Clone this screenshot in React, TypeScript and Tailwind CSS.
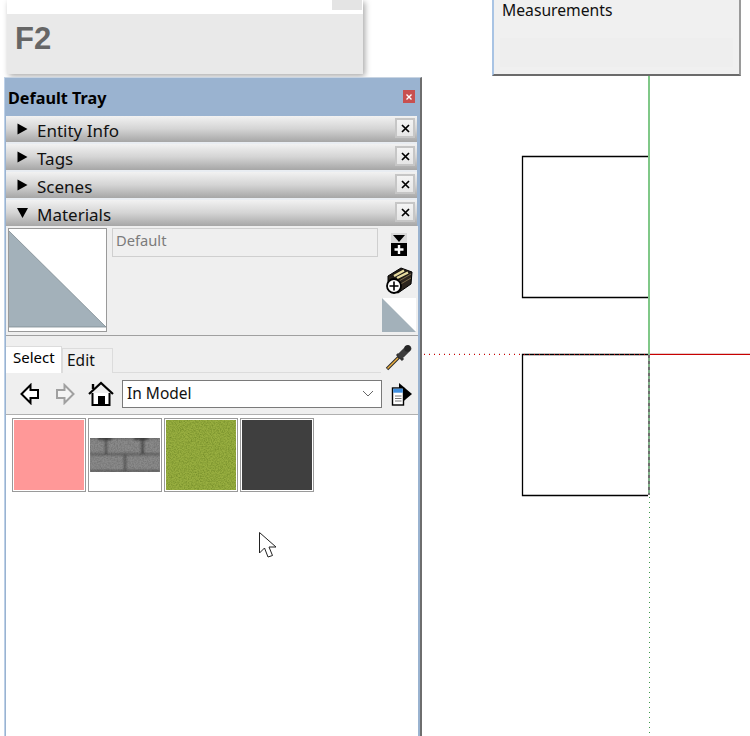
import React from "react";

const FONT = "font-['Noto_Sans','Open_Sans',sans-serif]";

function Row({ label, open }: { label: string; open?: boolean }) {
  return (
    <div className={`mr-px shrink-0 bg-clip-padding ${open ? "h-[26px]" : "h-[28px] border-b-2 border-b-[#e9edf2]"}`}>
      <div className="h-[26px] flex items-start bg-gradient-to-b from-[#f2f2f2] via-[#d4d4d4] to-[#a6a6a6] pr-[2px]">
        <svg width="11" height="12" viewBox="0 0 11 12" className="ml-[11px] mt-[7px] shrink-0">
          {open ? <path d="M0 1 H11 L5.5 11 Z" fill="#000" /> : <path d="M0.5 0.5 L10.5 6 L0.5 11.5 Z" fill="#000" />}
        </svg>
        <span className="ml-[9px] text-[17px] leading-[26px] mt-[2px] text-[#111]">{label}</span>
        <div className="ml-auto mt-[2px] w-[20px] h-[20px] border-2 border-[#c6c6c6] bg-gradient-to-b from-[#f4f4f4] to-[#e6e6e6] flex items-center justify-center">
          <svg width="9" height="9" viewBox="0 0 9 9">
            <path d="M1 1 L8 8 M8 1 L1 8" stroke="#000" strokeWidth="1.7" />
          </svg>
        </div>
      </div>
    </div>
  );
}

function Thumb({ children, bg }: { children?: React.ReactNode; bg: string }) {
  return (
    <div className="w-[74px] h-[74px] border border-[#9a9a9a] p-[1px] bg-white shrink-0">
      <div className={`w-full h-full overflow-hidden ${bg}`}>{children}</div>
    </div>
  );
}

function Bricks() {
  return (
    <svg width="70" height="70" viewBox="0 0 70 70" className="block">
      <defs>
        <filter id="stone" x="0" y="0" width="100%" height="100%" colorInterpolationFilters="sRGB">
          <feTurbulence type="fractalNoise" baseFrequency="0.7" numOctaves="3" seed="4" />
          <feColorMatrix values="0 0 0 0 0.35  0 0 0 0 0.35  0 0 0 0 0.35  0.9 0 0 0 -0.3" />
          <feComposite in2="SourceGraphic" operator="in" />
          <feMerge>
            <feMergeNode in="SourceGraphic" />
            <feMergeNode />
          </feMerge>
        </filter>
        <filter id="soft" x="-20%" y="-20%" width="140%" height="140%">
          <feGaussianBlur stdDeviation="0.9" />
        </filter>
        <clipPath id="strip">
          <rect x="0" y="18" width="70" height="34" />
        </clipPath>
      </defs>
      <rect x="0" y="18" width="70" height="34" fill="#8a8a8a" filter="url(#stone)" />
      <g clipPath="url(#strip)" filter="url(#soft)">
        <rect x="0" y="17" width="70" height="2" fill="#4a4a4a" opacity=".5" />
        <rect x="8" y="17" width="14" height="3" fill="#222" opacity=".7" />
        <rect x="44" y="17" width="14" height="3" fill="#222" opacity=".7" />
        <rect x="0" y="33.5" width="70" height="1.5" fill="#2f2f2f" opacity=".65" />
        <rect x="0" y="50" width="70" height="2" fill="#3a3a3a" opacity=".6" />
        <rect x="15" y="18" width="2" height="16" fill="#2f2f2f" opacity=".6" />
        <rect x="51" y="18" width="3" height="16" fill="#2f2f2f" opacity=".6" />
        <rect x="34" y="35" width="2" height="16" fill="#2f2f2f" opacity=".6" />
      </g>
    </svg>
  );
}

function Grass() {
  return (
    <svg width="70" height="70" viewBox="0 0 70 70" className="block">
      <defs>
        <filter id="grass" x="0" y="0" width="100%" height="100%" colorInterpolationFilters="sRGB">
          <feTurbulence type="fractalNoise" baseFrequency="0.75" numOctaves="2" seed="7" />
          <feColorMatrix values="0 0 0 0 0.42  0 0 0 0 0.52  0 0 0 0 0.14  1.6 0 0 0 -0.6" />
          <feComposite in2="SourceGraphic" operator="in" />
          <feMerge>
            <feMergeNode in="SourceGraphic" />
            <feMergeNode />
          </feMerge>
        </filter>
      </defs>
      <rect width="70" height="70" fill="#98ae40" filter="url(#grass)" />
    </svg>
  );
}

function Canvas() {
  return (
    <svg width="750" height="736" viewBox="0 0 750 736" className="absolute left-0 top-0">
      <rect x="648" y="70" width="2" height="284" fill="#80c888" />
      <rect x="648" y="354" width="2" height="141" fill="#80b088" />
      <line x1="649" y1="355" x2="649" y2="495" stroke="#6f6f6f" strokeWidth="2" strokeDasharray="3 3" />
      <line x1="649.5" y1="497" x2="649.5" y2="736" stroke="#3f9a4a" strokeWidth="1" strokeDasharray="1 4" />
      <rect x="650" y="353" width="100" height="1" fill="#e6c8c8" />
      <rect x="650" y="354" width="100" height="1" fill="#c80000" />
      <line x1="424" y1="353.5" x2="523" y2="353.5" stroke="#d8d0d0" strokeWidth="1" strokeDasharray="1 4" strokeDashoffset="-5" />
      <line x1="424" y1="354.5" x2="523" y2="354.5" stroke="#d00000" strokeWidth="1" strokeDasharray="1 4" strokeDashoffset="-5" />
      <path d="M648 156.5 H522.5 V297.5 H648" fill="none" stroke="#000" strokeWidth="1.3" />
      <path d="M648 354.5 H522.5 V495.5 H648" fill="none" stroke="#000" strokeWidth="1.3" />
      <line x1="524" y1="354.5" x2="648" y2="354.5" stroke="#d00000" strokeWidth="1" strokeDasharray="1 4" />
    </svg>
  );
}

export default function App() {
  return (
    <div className={`relative w-[750px] h-[736px] overflow-hidden bg-white ${FONT}`}>
      <Canvas />

      {/* Measurements window */}
      <div className="absolute left-[492px] top-0 w-[249px] h-[76px] bg-[#f0f0f0] border-l-2 border-r-2 border-b-2 border-l-[#a9c4e4] border-r-[#9a9a9a] border-b-[#6b6b6b] px-[5px] pt-0">
        <div className="text-[15.7px] leading-[20px] text-[#111] ml-[3px]">Measurements</div>
        <div className="mt-[18px] h-[29px] mx-[1px] bg-[#eeeeee]" />
      </div>

      {/* F2 window */}
      <div className="absolute left-[7px] top-0 w-[356px] h-[74px] bg-[#e9e9e9] shadow-[2px_2px_6px_rgba(0,0,0,0.35)]">
        <div className="h-[14px] bg-white flex justify-end items-start pr-[1px] overflow-hidden">
          <div className="w-[30px] h-[10px] bg-[#e4e4e4]" />
        </div>
        <div className="ml-[8px] mt-[6px] text-[31px] leading-[38px] font-bold text-[#666] font-['Liberation_Sans',sans-serif]">F2</div>
      </div>

      {/* Default Tray */}
      <div className="absolute left-[4px] top-[77px] w-[418px] h-[659px] bg-[#9ab3d0] border-t border-t-[#c8d4e2] border-r-2 border-r-[#6e6e6e] border-l border-l-[#bcd0e8] flex flex-col">
        <div className="h-[38px] shrink-0 flex items-center pl-[3px] pr-[5px]">
          <span className="text-[16.2px] font-bold text-black mt-[3px]">Default Tray</span>
          <div className="ml-auto w-[12px] h-[13px] bg-[#c8504f] flex items-center justify-center -mt-[1px]">
            <svg width="6" height="6" viewBox="0 0 6 6">
              <path d="M0.5 0.5 L5.5 5.5 M5.5 0.5 L0.5 5.5" stroke="#fff" strokeWidth="1.4" />
            </svg>
          </div>
        </div>

        <div className="flex-1 flex flex-col pl-[1px] pr-[2px] min-h-0">
          <Row label="Entity Info" />
          <Row label="Tags" />
          <Row label="Scenes" />
          <Row label="Materials" open />

          {/* Preview section */}
          <div className="h-[110px] shrink-0 bg-[#efefef] border-b border-b-[#a0a0a0] flex pl-[2px] pt-[2px]">
            <div className="w-[99px] h-[104px] border border-[#9a9a9a] bg-white shrink-0">
              <svg width="97" height="102" viewBox="0 0 97 102" className="block">
                <rect width="97" height="102" fill="#fff" />
                <path d="M0 2 L97 98 H0 Z" fill="#a3b1ba" />
                <path d="M0 2 L97 98 H0" fill="none" stroke="#7f8b92" strokeWidth="0.8" />
              </svg>
            </div>
            <div className="ml-[5px] w-[266px] h-[29px] border border-[#cfcfcf] pl-[3px] text-[14.7px] leading-[23px] text-[#7b7b7b] shrink-0">
              Default
            </div>
            <div className="ml-[4px] flex-1 flex flex-col items-start">
              <svg width="16" height="23" viewBox="0 0 16 23" className="mt-[5px] ml-[9px] shrink-0">
                <rect width="16" height="23" fill="#d9d9d9" />
                <rect x="0" y="10" width="16" height="13" fill="#000" />
                <path d="M2 2 H14 L8 9 Z" fill="#000" />
                <path d="M8 12 V21 M3.5 16.5 H12.5" stroke="#fff" strokeWidth="2.4" />
              </svg>
              <svg width="30" height="30" viewBox="0 0 30 30" className="mt-[10px] ml-[2px] shrink-0">
                <path d="M4 10 L17 2 L28 6 L27 18 L14 27 L4 22 Z" fill="#2b241d" stroke="#000" />
                <path d="M5 10 L17 3 L27 7 L15 14 Z" fill="#1e1a16" />
                <path d="M10 10 L20 4.5 M13 12 L24 6.5" stroke="#e8dca0" strokeWidth="2.4" />
                <path d="M15 15 L27 8 M15 19 L27 12" stroke="#7a6a4a" strokeWidth="1" />
                <circle cx="10" cy="20" r="7" fill="#fff" stroke="#000" strokeWidth="1.8" />
                <path d="M10 15.5 V24.5 M5.5 20 H14.5" stroke="#000" strokeWidth="1.6" />
              </svg>
              <svg width="34" height="34" viewBox="0 0 34 34" className="mt-[2px] shrink-0">
                <rect width="34" height="34" fill="#fff" />
                <path d="M0 0 L34 34 H0 Z" fill="#a3b1ba" />
              </svg>
            </div>
          </div>

          {/* Tabs */}
          <div className="h-[37px] shrink-0 bg-[#efefef] flex items-end relative">
            <div className="w-[56px] h-[27px] bg-white border-t border-t-[#dcdcdc] border-r border-r-[#dcdcdc] text-[15px] leading-[20px] pl-[7px] text-black">Select</div>
            <div className="w-[51px] h-[25px] border border-[#dcdcdc] border-b-0 text-[15.5px] leading-[22px] pl-[4px] text-[#111] bg-[#f0f0f0]">Edit</div>
            <div className="w-[268px] h-px bg-[#dcdcdc]" />
            <svg width="28" height="28" viewBox="0 0 28 28" className="absolute right-[5px] top-[7px]">
              <path d="M2 26 L14 14" stroke="#2a2a2a" strokeWidth="3.4" />
              <path d="M2.5 25.5 L13 15" stroke="#eeb040" strokeWidth="1.5" />
              <path d="M12 11 L18 17" stroke="#333" strokeWidth="3" />
              <path d="M16.5 12 L23 5.5" stroke="#3c3c3c" strokeWidth="6.5" strokeLinecap="round" />
              <circle cx="22.5" cy="5.5" r="3.2" fill="#262626" />
            </svg>
          </div>

          {/* Toolbar */}
          <div className="h-[42px] shrink-0 bg-[#efefef] border-b border-b-[#b0b0b0] flex items-center">
            <svg width="20" height="22" viewBox="0 0 20 22" className="ml-[14px] shrink-0">
              <path d="M1.5 11 L10.5 2 V7 H18 V15 H10.5 V20 Z" fill="#fff" stroke="#000" strokeWidth="2" />
            </svg>
            <svg width="20" height="22" viewBox="0 0 20 22" className="ml-[15px] shrink-0">
              <path d="M18.5 11 L9.5 2 V7 H2 V15 H9.5 V20 Z" fill="#f4f4f4" stroke="#a0a0a0" strokeWidth="2" />
            </svg>
            <svg width="26" height="26" viewBox="0 0 26 26" className="ml-[13px] shrink-0">
              <path d="M1 13 L13 2 L25 13" fill="none" stroke="#000" strokeWidth="2.2" />
              <path d="M5 3 V8" stroke="#000" strokeWidth="2.4" />
              <path d="M4.5 12 V24 H21.5 V12" fill="#fff" stroke="#000" strokeWidth="2" />
              <rect x="10" y="15" width="7" height="9" fill="#000" />
            </svg>
            <div className="ml-[8px] w-[260px] h-[28px] shrink-0 bg-white border border-[#7a7a7a] flex items-center pl-[4px] text-[15.5px] text-[#111]">
              <span>In Model</span>
              <svg width="12" height="7" viewBox="0 0 12 7" className="ml-auto mr-[7px]">
                <path d="M1 1 L6 6 L11 1" fill="none" stroke="#666" strokeWidth="1" />
              </svg>
            </div>
            <svg width="22" height="24" viewBox="0 0 22 24" className="ml-[9px] shrink-0">
              <path d="M8 1 L21 12 L8 23 Z" fill="#000" />
              <rect x="1.5" y="6" width="11" height="17" fill="#fff" stroke="#000" strokeWidth="1.4" />
              <rect x="2.2" y="6.7" width="9.6" height="4" fill="#3f8fe0" />
              <path d="M4 14 H10.5 M4 16.5 H10.5 M4 19 H10.5" stroke="#777" strokeWidth="1" />
            </svg>
          </div>

          {/* Swatches */}
          <div className="flex-1 bg-white pt-[3px] pl-[6px] flex items-start gap-[2px]">
            <Thumb bg="bg-[#ff9898]" />
            <Thumb bg="bg-white"><Bricks /></Thumb>
            <Thumb bg="bg-[#8fa83c]"><Grass /></Thumb>
            <Thumb bg="bg-[#3f3f3f]" />
          </div>
        </div>
      </div>

      {/* Mouse cursor */}
      <svg width="20" height="28" viewBox="0 0 20 28" className="absolute left-[258px] top-[531px]">
        <path d="M1.5 1.5 V22 L6.5 17 L10 26 L14.5 24.5 L11 16 H18 Z" fill="#fff" stroke="#222" strokeWidth="1" />
      </svg>
    </div>
  );
}
